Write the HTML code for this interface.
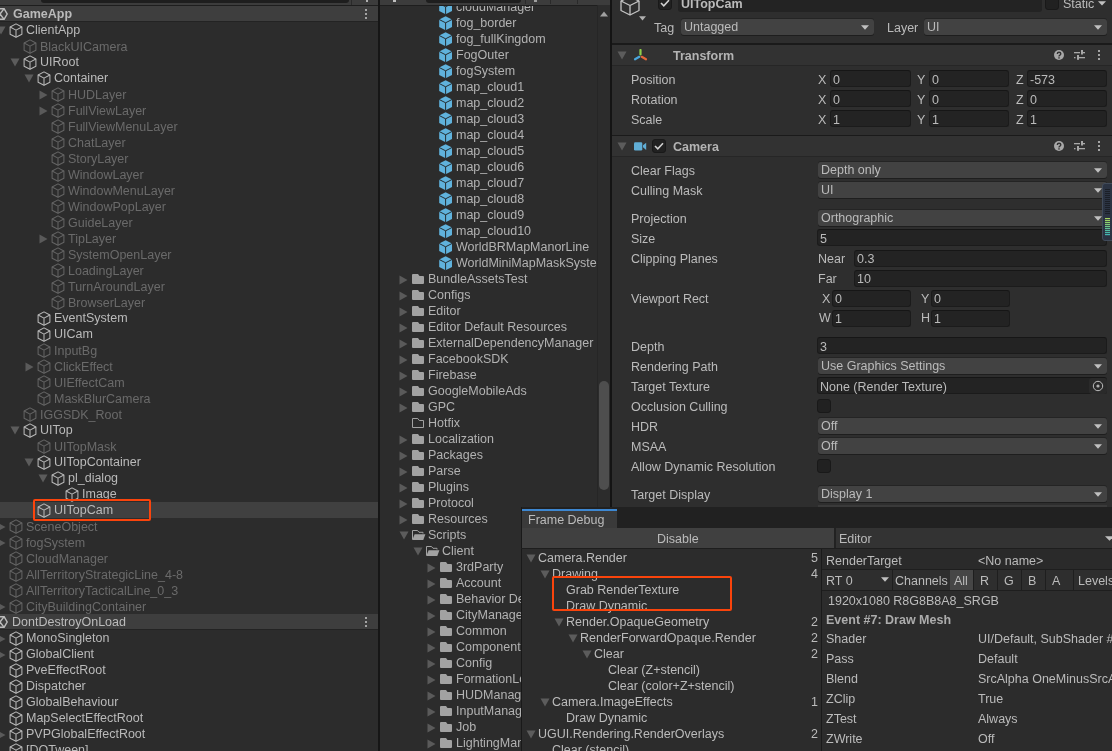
<!DOCTYPE html><html><head><meta charset="utf-8"><style>
html,body{margin:0;padding:0;}
body{width:1112px;height:751px;overflow:hidden;position:relative;background:#2c2c2c;font-family:"Liberation Sans",sans-serif;font-size:12.5px;}
.t{position:absolute;white-space:pre;line-height:16px;height:16px;will-change:transform;}
.r{position:absolute;}
.clip{position:absolute;overflow:hidden;}
</style></head><body>
<div class="clip" style="left:0;top:0;width:378px;height:751px;background:#2c2c2c">
<div class="r" style="left:0px;top:0px;width:378px;height:5px;background:#3c3c3c;"></div>
<div class="r" style="left:0px;top:5px;width:378px;height:1px;background:#1e1e1e;"></div>
<div class="r" style="left:41px;top:0px;width:308px;height:3px;background:#1e1e1e;border-radius:0 0 4px 4px;"></div>
<div class="r" style="left:351px;top:0px;width:1px;height:5px;background:#2a2a2a;"></div>
<div class="r" style="left:366px;top:0px;width:2px;height:2px;background:#b0b0b0;"></div>
<div class="r" style="left:0px;top:6px;width:378px;height:15px;background:#3e3e3e;"></div>
<div class="r" style="left:0px;top:21px;width:378px;height:1px;background:#232323;"></div>
<svg class="r" style="left:-5.5px;top:6.5px;" width="13" height="14" viewBox="0 0 13 14"><g fill="none" stroke="#bbbbbb" stroke-width="1.5"><polygon points="12.20,7.00 9.10,12.37 2.90,12.37 -0.20,7.00 2.90,1.63 9.10,1.63"/><path d="M5.00 7.0 L9.10 12.37"/><path d="M5.00 7.0 L-0.20 7.00"/><path d="M5.00 7.0 L9.10 1.63"/></g></svg>
<div class="t" style="left:13px;top:5.5px;color:#bababa;font-size:12.5px;font-weight:bold;">GameApp</div>
<svg class="r" style="left:365px;top:9px;" width="2" height="10" viewBox="0 0 2 10"><rect x="0" y="0" width="2" height="2" fill="#a4a4a4"/><rect x="0" y="4" width="2" height="2" fill="#a4a4a4"/><rect x="0" y="8" width="2" height="2" fill="#a4a4a4"/></svg>
<svg class="r" style="left:-4.5px;top:26px;" width="10" height="9" viewBox="0 0 10 9"><path d="M0.5 0.5 L9.5 0.5 L5 8.5 Z" fill="#5c5c5c"/></svg>
<svg class="r" style="left:9px;top:23px;" width="14" height="15" viewBox="0 0 14 15"><g fill="none" stroke="#b8b8b8" stroke-width="1.05" stroke-linejoin="round"><path d="M7 0.9 L12.9 4 L12.9 11.2 L7 14.3 L1.1 11.2 L1.1 4 Z"/><path d="M1.1 4 L7 7.1 L12.9 4 M7 7.1 L7 14.3"/></g></svg>
<div class="t" style="left:26px;top:22px;color:#bababa;font-size:12.5px;">ClientApp</div>
<svg class="r" style="left:23px;top:39px;" width="14" height="15" viewBox="0 0 14 15"><g fill="none" stroke="#646464" stroke-width="1.05" stroke-linejoin="round"><path d="M7 0.9 L12.9 4 L12.9 11.2 L7 14.3 L1.1 11.2 L1.1 4 Z"/><path d="M1.1 4 L7 7.1 L12.9 4 M7 7.1 L7 14.3"/></g></svg>
<div class="t" style="left:40px;top:39px;color:#6a6a6a;font-size:12.5px;">BlackUICamera</div>
<svg class="r" style="left:9.5px;top:58px;" width="10" height="9" viewBox="0 0 10 9"><path d="M0.5 0.5 L9.5 0.5 L5 8.5 Z" fill="#5c5c5c"/></svg>
<svg class="r" style="left:23px;top:55px;" width="14" height="15" viewBox="0 0 14 15"><g fill="none" stroke="#b8b8b8" stroke-width="1.05" stroke-linejoin="round"><path d="M7 0.9 L12.9 4 L12.9 11.2 L7 14.3 L1.1 11.2 L1.1 4 Z"/><path d="M1.1 4 L7 7.1 L12.9 4 M7 7.1 L7 14.3"/></g></svg>
<div class="t" style="left:40px;top:54px;color:#bababa;font-size:12.5px;">UIRoot</div>
<svg class="r" style="left:23.5px;top:74px;" width="10" height="9" viewBox="0 0 10 9"><path d="M0.5 0.5 L9.5 0.5 L5 8.5 Z" fill="#5c5c5c"/></svg>
<svg class="r" style="left:37px;top:71px;" width="14" height="15" viewBox="0 0 14 15"><g fill="none" stroke="#b8b8b8" stroke-width="1.05" stroke-linejoin="round"><path d="M7 0.9 L12.9 4 L12.9 11.2 L7 14.3 L1.1 11.2 L1.1 4 Z"/><path d="M1.1 4 L7 7.1 L12.9 4 M7 7.1 L7 14.3"/></g></svg>
<div class="t" style="left:54px;top:70px;color:#bababa;font-size:12.5px;">Container</div>
<svg class="r" style="left:39px;top:89.5px;" width="9" height="10" viewBox="0 0 9 10"><path d="M0.5 0.5 L8.5 5 L0.5 9.5 Z" fill="#5a5a5a"/></svg>
<svg class="r" style="left:51px;top:87px;" width="14" height="15" viewBox="0 0 14 15"><g fill="none" stroke="#646464" stroke-width="1.05" stroke-linejoin="round"><path d="M7 0.9 L12.9 4 L12.9 11.2 L7 14.3 L1.1 11.2 L1.1 4 Z"/><path d="M1.1 4 L7 7.1 L12.9 4 M7 7.1 L7 14.3"/></g></svg>
<div class="t" style="left:68px;top:87px;color:#6a6a6a;font-size:12.5px;">HUDLayer</div>
<svg class="r" style="left:39px;top:105.5px;" width="9" height="10" viewBox="0 0 9 10"><path d="M0.5 0.5 L8.5 5 L0.5 9.5 Z" fill="#5a5a5a"/></svg>
<svg class="r" style="left:51px;top:103px;" width="14" height="15" viewBox="0 0 14 15"><g fill="none" stroke="#646464" stroke-width="1.05" stroke-linejoin="round"><path d="M7 0.9 L12.9 4 L12.9 11.2 L7 14.3 L1.1 11.2 L1.1 4 Z"/><path d="M1.1 4 L7 7.1 L12.9 4 M7 7.1 L7 14.3"/></g></svg>
<div class="t" style="left:68px;top:103px;color:#6a6a6a;font-size:12.5px;">FullViewLayer</div>
<svg class="r" style="left:51px;top:119px;" width="14" height="15" viewBox="0 0 14 15"><g fill="none" stroke="#646464" stroke-width="1.05" stroke-linejoin="round"><path d="M7 0.9 L12.9 4 L12.9 11.2 L7 14.3 L1.1 11.2 L1.1 4 Z"/><path d="M1.1 4 L7 7.1 L12.9 4 M7 7.1 L7 14.3"/></g></svg>
<div class="t" style="left:68px;top:119px;color:#6a6a6a;font-size:12.5px;">FullViewMenuLayer</div>
<svg class="r" style="left:51px;top:135px;" width="14" height="15" viewBox="0 0 14 15"><g fill="none" stroke="#646464" stroke-width="1.05" stroke-linejoin="round"><path d="M7 0.9 L12.9 4 L12.9 11.2 L7 14.3 L1.1 11.2 L1.1 4 Z"/><path d="M1.1 4 L7 7.1 L12.9 4 M7 7.1 L7 14.3"/></g></svg>
<div class="t" style="left:68px;top:135px;color:#6a6a6a;font-size:12.5px;">ChatLayer</div>
<svg class="r" style="left:51px;top:151px;" width="14" height="15" viewBox="0 0 14 15"><g fill="none" stroke="#646464" stroke-width="1.05" stroke-linejoin="round"><path d="M7 0.9 L12.9 4 L12.9 11.2 L7 14.3 L1.1 11.2 L1.1 4 Z"/><path d="M1.1 4 L7 7.1 L12.9 4 M7 7.1 L7 14.3"/></g></svg>
<div class="t" style="left:68px;top:151px;color:#6a6a6a;font-size:12.5px;">StoryLayer</div>
<svg class="r" style="left:51px;top:167px;" width="14" height="15" viewBox="0 0 14 15"><g fill="none" stroke="#646464" stroke-width="1.05" stroke-linejoin="round"><path d="M7 0.9 L12.9 4 L12.9 11.2 L7 14.3 L1.1 11.2 L1.1 4 Z"/><path d="M1.1 4 L7 7.1 L12.9 4 M7 7.1 L7 14.3"/></g></svg>
<div class="t" style="left:68px;top:167px;color:#6a6a6a;font-size:12.5px;">WindowLayer</div>
<svg class="r" style="left:51px;top:183px;" width="14" height="15" viewBox="0 0 14 15"><g fill="none" stroke="#646464" stroke-width="1.05" stroke-linejoin="round"><path d="M7 0.9 L12.9 4 L12.9 11.2 L7 14.3 L1.1 11.2 L1.1 4 Z"/><path d="M1.1 4 L7 7.1 L12.9 4 M7 7.1 L7 14.3"/></g></svg>
<div class="t" style="left:68px;top:183px;color:#6a6a6a;font-size:12.5px;">WindowMenuLayer</div>
<svg class="r" style="left:51px;top:199px;" width="14" height="15" viewBox="0 0 14 15"><g fill="none" stroke="#646464" stroke-width="1.05" stroke-linejoin="round"><path d="M7 0.9 L12.9 4 L12.9 11.2 L7 14.3 L1.1 11.2 L1.1 4 Z"/><path d="M1.1 4 L7 7.1 L12.9 4 M7 7.1 L7 14.3"/></g></svg>
<div class="t" style="left:68px;top:199px;color:#6a6a6a;font-size:12.5px;">WindowPopLayer</div>
<svg class="r" style="left:51px;top:215px;" width="14" height="15" viewBox="0 0 14 15"><g fill="none" stroke="#646464" stroke-width="1.05" stroke-linejoin="round"><path d="M7 0.9 L12.9 4 L12.9 11.2 L7 14.3 L1.1 11.2 L1.1 4 Z"/><path d="M1.1 4 L7 7.1 L12.9 4 M7 7.1 L7 14.3"/></g></svg>
<div class="t" style="left:68px;top:215px;color:#6a6a6a;font-size:12.5px;">GuideLayer</div>
<svg class="r" style="left:39px;top:233.5px;" width="9" height="10" viewBox="0 0 9 10"><path d="M0.5 0.5 L8.5 5 L0.5 9.5 Z" fill="#5a5a5a"/></svg>
<svg class="r" style="left:51px;top:231px;" width="14" height="15" viewBox="0 0 14 15"><g fill="none" stroke="#646464" stroke-width="1.05" stroke-linejoin="round"><path d="M7 0.9 L12.9 4 L12.9 11.2 L7 14.3 L1.1 11.2 L1.1 4 Z"/><path d="M1.1 4 L7 7.1 L12.9 4 M7 7.1 L7 14.3"/></g></svg>
<div class="t" style="left:68px;top:231px;color:#6a6a6a;font-size:12.5px;">TipLayer</div>
<svg class="r" style="left:51px;top:247px;" width="14" height="15" viewBox="0 0 14 15"><g fill="none" stroke="#646464" stroke-width="1.05" stroke-linejoin="round"><path d="M7 0.9 L12.9 4 L12.9 11.2 L7 14.3 L1.1 11.2 L1.1 4 Z"/><path d="M1.1 4 L7 7.1 L12.9 4 M7 7.1 L7 14.3"/></g></svg>
<div class="t" style="left:68px;top:247px;color:#6a6a6a;font-size:12.5px;">SystemOpenLayer</div>
<svg class="r" style="left:51px;top:263px;" width="14" height="15" viewBox="0 0 14 15"><g fill="none" stroke="#646464" stroke-width="1.05" stroke-linejoin="round"><path d="M7 0.9 L12.9 4 L12.9 11.2 L7 14.3 L1.1 11.2 L1.1 4 Z"/><path d="M1.1 4 L7 7.1 L12.9 4 M7 7.1 L7 14.3"/></g></svg>
<div class="t" style="left:68px;top:263px;color:#6a6a6a;font-size:12.5px;">LoadingLayer</div>
<svg class="r" style="left:51px;top:279px;" width="14" height="15" viewBox="0 0 14 15"><g fill="none" stroke="#646464" stroke-width="1.05" stroke-linejoin="round"><path d="M7 0.9 L12.9 4 L12.9 11.2 L7 14.3 L1.1 11.2 L1.1 4 Z"/><path d="M1.1 4 L7 7.1 L12.9 4 M7 7.1 L7 14.3"/></g></svg>
<div class="t" style="left:68px;top:279px;color:#6a6a6a;font-size:12.5px;">TurnAroundLayer</div>
<svg class="r" style="left:51px;top:295px;" width="14" height="15" viewBox="0 0 14 15"><g fill="none" stroke="#646464" stroke-width="1.05" stroke-linejoin="round"><path d="M7 0.9 L12.9 4 L12.9 11.2 L7 14.3 L1.1 11.2 L1.1 4 Z"/><path d="M1.1 4 L7 7.1 L12.9 4 M7 7.1 L7 14.3"/></g></svg>
<div class="t" style="left:68px;top:295px;color:#6a6a6a;font-size:12.5px;">BrowserLayer</div>
<svg class="r" style="left:37px;top:311px;" width="14" height="15" viewBox="0 0 14 15"><g fill="none" stroke="#b8b8b8" stroke-width="1.05" stroke-linejoin="round"><path d="M7 0.9 L12.9 4 L12.9 11.2 L7 14.3 L1.1 11.2 L1.1 4 Z"/><path d="M1.1 4 L7 7.1 L12.9 4 M7 7.1 L7 14.3"/></g></svg>
<div class="t" style="left:54px;top:310px;color:#bababa;font-size:12.5px;">EventSystem</div>
<svg class="r" style="left:37px;top:327px;" width="14" height="15" viewBox="0 0 14 15"><g fill="none" stroke="#b8b8b8" stroke-width="1.05" stroke-linejoin="round"><path d="M7 0.9 L12.9 4 L12.9 11.2 L7 14.3 L1.1 11.2 L1.1 4 Z"/><path d="M1.1 4 L7 7.1 L12.9 4 M7 7.1 L7 14.3"/></g></svg>
<div class="t" style="left:54px;top:326px;color:#bababa;font-size:12.5px;">UICam</div>
<svg class="r" style="left:37px;top:343px;" width="14" height="15" viewBox="0 0 14 15"><g fill="none" stroke="#646464" stroke-width="1.05" stroke-linejoin="round"><path d="M7 0.9 L12.9 4 L12.9 11.2 L7 14.3 L1.1 11.2 L1.1 4 Z"/><path d="M1.1 4 L7 7.1 L12.9 4 M7 7.1 L7 14.3"/></g></svg>
<div class="t" style="left:54px;top:343px;color:#6a6a6a;font-size:12.5px;">InputBg</div>
<svg class="r" style="left:25px;top:361.5px;" width="9" height="10" viewBox="0 0 9 10"><path d="M0.5 0.5 L8.5 5 L0.5 9.5 Z" fill="#5a5a5a"/></svg>
<svg class="r" style="left:37px;top:359px;" width="14" height="15" viewBox="0 0 14 15"><g fill="none" stroke="#646464" stroke-width="1.05" stroke-linejoin="round"><path d="M7 0.9 L12.9 4 L12.9 11.2 L7 14.3 L1.1 11.2 L1.1 4 Z"/><path d="M1.1 4 L7 7.1 L12.9 4 M7 7.1 L7 14.3"/></g></svg>
<div class="t" style="left:54px;top:359px;color:#6a6a6a;font-size:12.5px;">ClickEffect</div>
<svg class="r" style="left:37px;top:375px;" width="14" height="15" viewBox="0 0 14 15"><g fill="none" stroke="#646464" stroke-width="1.05" stroke-linejoin="round"><path d="M7 0.9 L12.9 4 L12.9 11.2 L7 14.3 L1.1 11.2 L1.1 4 Z"/><path d="M1.1 4 L7 7.1 L12.9 4 M7 7.1 L7 14.3"/></g></svg>
<div class="t" style="left:54px;top:375px;color:#6a6a6a;font-size:12.5px;">UIEffectCam</div>
<svg class="r" style="left:37px;top:391px;" width="14" height="15" viewBox="0 0 14 15"><g fill="none" stroke="#646464" stroke-width="1.05" stroke-linejoin="round"><path d="M7 0.9 L12.9 4 L12.9 11.2 L7 14.3 L1.1 11.2 L1.1 4 Z"/><path d="M1.1 4 L7 7.1 L12.9 4 M7 7.1 L7 14.3"/></g></svg>
<div class="t" style="left:54px;top:391px;color:#6a6a6a;font-size:12.5px;">MaskBlurCamera</div>
<svg class="r" style="left:23px;top:407px;" width="14" height="15" viewBox="0 0 14 15"><g fill="none" stroke="#646464" stroke-width="1.05" stroke-linejoin="round"><path d="M7 0.9 L12.9 4 L12.9 11.2 L7 14.3 L1.1 11.2 L1.1 4 Z"/><path d="M1.1 4 L7 7.1 L12.9 4 M7 7.1 L7 14.3"/></g></svg>
<div class="t" style="left:40px;top:407px;color:#6a6a6a;font-size:12.5px;">IGGSDK_Root</div>
<svg class="r" style="left:9.5px;top:426px;" width="10" height="9" viewBox="0 0 10 9"><path d="M0.5 0.5 L9.5 0.5 L5 8.5 Z" fill="#5c5c5c"/></svg>
<svg class="r" style="left:23px;top:423px;" width="14" height="15" viewBox="0 0 14 15"><g fill="none" stroke="#b8b8b8" stroke-width="1.05" stroke-linejoin="round"><path d="M7 0.9 L12.9 4 L12.9 11.2 L7 14.3 L1.1 11.2 L1.1 4 Z"/><path d="M1.1 4 L7 7.1 L12.9 4 M7 7.1 L7 14.3"/></g></svg>
<div class="t" style="left:40px;top:422px;color:#bababa;font-size:12.5px;">UITop</div>
<svg class="r" style="left:37px;top:439px;" width="14" height="15" viewBox="0 0 14 15"><g fill="none" stroke="#646464" stroke-width="1.05" stroke-linejoin="round"><path d="M7 0.9 L12.9 4 L12.9 11.2 L7 14.3 L1.1 11.2 L1.1 4 Z"/><path d="M1.1 4 L7 7.1 L12.9 4 M7 7.1 L7 14.3"/></g></svg>
<div class="t" style="left:54px;top:439px;color:#6a6a6a;font-size:12.5px;">UITopMask</div>
<svg class="r" style="left:23.5px;top:458px;" width="10" height="9" viewBox="0 0 10 9"><path d="M0.5 0.5 L9.5 0.5 L5 8.5 Z" fill="#5c5c5c"/></svg>
<svg class="r" style="left:37px;top:455px;" width="14" height="15" viewBox="0 0 14 15"><g fill="none" stroke="#b8b8b8" stroke-width="1.05" stroke-linejoin="round"><path d="M7 0.9 L12.9 4 L12.9 11.2 L7 14.3 L1.1 11.2 L1.1 4 Z"/><path d="M1.1 4 L7 7.1 L12.9 4 M7 7.1 L7 14.3"/></g></svg>
<div class="t" style="left:54px;top:454px;color:#bababa;font-size:12.5px;">UITopContainer</div>
<svg class="r" style="left:37.5px;top:474px;" width="10" height="9" viewBox="0 0 10 9"><path d="M0.5 0.5 L9.5 0.5 L5 8.5 Z" fill="#5c5c5c"/></svg>
<svg class="r" style="left:51px;top:471px;" width="14" height="15" viewBox="0 0 14 15"><g fill="none" stroke="#b8b8b8" stroke-width="1.05" stroke-linejoin="round"><path d="M7 0.9 L12.9 4 L12.9 11.2 L7 14.3 L1.1 11.2 L1.1 4 Z"/><path d="M1.1 4 L7 7.1 L12.9 4 M7 7.1 L7 14.3"/></g></svg>
<div class="t" style="left:68px;top:470px;color:#bababa;font-size:12.5px;">pl_dialog</div>
<svg class="r" style="left:65px;top:487px;" width="14" height="15" viewBox="0 0 14 15"><g fill="none" stroke="#b8b8b8" stroke-width="1.05" stroke-linejoin="round"><path d="M7 0.9 L12.9 4 L12.9 11.2 L7 14.3 L1.1 11.2 L1.1 4 Z"/><path d="M1.1 4 L7 7.1 L12.9 4 M7 7.1 L7 14.3"/></g></svg>
<div class="t" style="left:82px;top:486px;color:#bababa;font-size:12.5px;">Image</div>
<div class="r" style="left:0px;top:502px;width:378px;height:16px;background:#404040;"></div>
<svg class="r" style="left:37px;top:503px;" width="14" height="15" viewBox="0 0 14 15"><g fill="none" stroke="#b8b8b8" stroke-width="1.05" stroke-linejoin="round"><path d="M7 0.9 L12.9 4 L12.9 11.2 L7 14.3 L1.1 11.2 L1.1 4 Z"/><path d="M1.1 4 L7 7.1 L12.9 4 M7 7.1 L7 14.3"/></g></svg>
<div class="t" style="left:54px;top:502px;color:#bababa;font-size:12.5px;">UITopCam</div>
<svg class="r" style="left:-3px;top:521.5px;" width="9" height="10" viewBox="0 0 9 10"><path d="M0.5 0.5 L8.5 5 L0.5 9.5 Z" fill="#5a5a5a"/></svg>
<svg class="r" style="left:9px;top:519px;" width="14" height="15" viewBox="0 0 14 15"><g fill="none" stroke="#646464" stroke-width="1.05" stroke-linejoin="round"><path d="M7 0.9 L12.9 4 L12.9 11.2 L7 14.3 L1.1 11.2 L1.1 4 Z"/><path d="M1.1 4 L7 7.1 L12.9 4 M7 7.1 L7 14.3"/></g></svg>
<div class="t" style="left:26px;top:519px;color:#6a6a6a;font-size:12.5px;">SceneObject</div>
<svg class="r" style="left:-3px;top:537.5px;" width="9" height="10" viewBox="0 0 9 10"><path d="M0.5 0.5 L8.5 5 L0.5 9.5 Z" fill="#5a5a5a"/></svg>
<svg class="r" style="left:9px;top:535px;" width="14" height="15" viewBox="0 0 14 15"><g fill="none" stroke="#646464" stroke-width="1.05" stroke-linejoin="round"><path d="M7 0.9 L12.9 4 L12.9 11.2 L7 14.3 L1.1 11.2 L1.1 4 Z"/><path d="M1.1 4 L7 7.1 L12.9 4 M7 7.1 L7 14.3"/></g></svg>
<div class="t" style="left:26px;top:535px;color:#6a6a6a;font-size:12.5px;">fogSystem</div>
<svg class="r" style="left:9px;top:551px;" width="14" height="15" viewBox="0 0 14 15"><g fill="none" stroke="#646464" stroke-width="1.05" stroke-linejoin="round"><path d="M7 0.9 L12.9 4 L12.9 11.2 L7 14.3 L1.1 11.2 L1.1 4 Z"/><path d="M1.1 4 L7 7.1 L12.9 4 M7 7.1 L7 14.3"/></g></svg>
<div class="t" style="left:26px;top:551px;color:#6a6a6a;font-size:12.5px;">CloudManager</div>
<svg class="r" style="left:9px;top:567px;" width="14" height="15" viewBox="0 0 14 15"><g fill="none" stroke="#646464" stroke-width="1.05" stroke-linejoin="round"><path d="M7 0.9 L12.9 4 L12.9 11.2 L7 14.3 L1.1 11.2 L1.1 4 Z"/><path d="M1.1 4 L7 7.1 L12.9 4 M7 7.1 L7 14.3"/></g></svg>
<div class="t" style="left:26px;top:567px;color:#6a6a6a;font-size:12.5px;">AllTerritoryStrategicLine_4-8</div>
<svg class="r" style="left:9px;top:583px;" width="14" height="15" viewBox="0 0 14 15"><g fill="none" stroke="#646464" stroke-width="1.05" stroke-linejoin="round"><path d="M7 0.9 L12.9 4 L12.9 11.2 L7 14.3 L1.1 11.2 L1.1 4 Z"/><path d="M1.1 4 L7 7.1 L12.9 4 M7 7.1 L7 14.3"/></g></svg>
<div class="t" style="left:26px;top:583px;color:#6a6a6a;font-size:12.5px;">AllTerritoryTacticalLine_0_3</div>
<svg class="r" style="left:-3px;top:601.5px;" width="9" height="10" viewBox="0 0 9 10"><path d="M0.5 0.5 L8.5 5 L0.5 9.5 Z" fill="#5a5a5a"/></svg>
<svg class="r" style="left:9px;top:599px;" width="14" height="15" viewBox="0 0 14 15"><g fill="none" stroke="#646464" stroke-width="1.05" stroke-linejoin="round"><path d="M7 0.9 L12.9 4 L12.9 11.2 L7 14.3 L1.1 11.2 L1.1 4 Z"/><path d="M1.1 4 L7 7.1 L12.9 4 M7 7.1 L7 14.3"/></g></svg>
<div class="t" style="left:26px;top:599px;color:#6a6a6a;font-size:12.5px;">CityBuildingContainer</div>
<div class="r" style="left:0px;top:614px;width:378px;height:15px;background:#3e3e3e;"></div>
<div class="r" style="left:0px;top:629px;width:378px;height:1px;background:#232323;"></div>
<svg class="r" style="left:-5.5px;top:614.5px;" width="13" height="14" viewBox="0 0 13 14"><g fill="none" stroke="#bbbbbb" stroke-width="1.5"><polygon points="12.20,7.00 9.10,12.37 2.90,12.37 -0.20,7.00 2.90,1.63 9.10,1.63"/><path d="M5.00 7.0 L9.10 12.37"/><path d="M5.00 7.0 L-0.20 7.00"/><path d="M5.00 7.0 L9.10 1.63"/></g></svg>
<div class="t" style="left:12px;top:614px;color:#bbbbbb;font-size:12.5px;">DontDestroyOnLoad</div>
<svg class="r" style="left:365px;top:617px;" width="2" height="10" viewBox="0 0 2 10"><rect x="0" y="0" width="2" height="2" fill="#a4a4a4"/><rect x="0" y="4" width="2" height="2" fill="#a4a4a4"/><rect x="0" y="8" width="2" height="2" fill="#a4a4a4"/></svg>
<svg class="r" style="left:-3px;top:633.5px;" width="9" height="10" viewBox="0 0 9 10"><path d="M0.5 0.5 L8.5 5 L0.5 9.5 Z" fill="#5a5a5a"/></svg>
<svg class="r" style="left:9px;top:631px;" width="14" height="15" viewBox="0 0 14 15"><g fill="none" stroke="#b8b8b8" stroke-width="1.05" stroke-linejoin="round"><path d="M7 0.9 L12.9 4 L12.9 11.2 L7 14.3 L1.1 11.2 L1.1 4 Z"/><path d="M1.1 4 L7 7.1 L12.9 4 M7 7.1 L7 14.3"/></g></svg>
<div class="t" style="left:26px;top:630px;color:#bababa;font-size:12.5px;">MonoSingleton</div>
<svg class="r" style="left:-3px;top:649.5px;" width="9" height="10" viewBox="0 0 9 10"><path d="M0.5 0.5 L8.5 5 L0.5 9.5 Z" fill="#5a5a5a"/></svg>
<svg class="r" style="left:9px;top:647px;" width="14" height="15" viewBox="0 0 14 15"><g fill="none" stroke="#b8b8b8" stroke-width="1.05" stroke-linejoin="round"><path d="M7 0.9 L12.9 4 L12.9 11.2 L7 14.3 L1.1 11.2 L1.1 4 Z"/><path d="M1.1 4 L7 7.1 L12.9 4 M7 7.1 L7 14.3"/></g></svg>
<div class="t" style="left:26px;top:646px;color:#bababa;font-size:12.5px;">GlobalClient</div>
<svg class="r" style="left:9px;top:663px;" width="14" height="15" viewBox="0 0 14 15"><g fill="none" stroke="#b8b8b8" stroke-width="1.05" stroke-linejoin="round"><path d="M7 0.9 L12.9 4 L12.9 11.2 L7 14.3 L1.1 11.2 L1.1 4 Z"/><path d="M1.1 4 L7 7.1 L12.9 4 M7 7.1 L7 14.3"/></g></svg>
<div class="t" style="left:26px;top:662px;color:#bababa;font-size:12.5px;">PveEffectRoot</div>
<svg class="r" style="left:9px;top:679px;" width="14" height="15" viewBox="0 0 14 15"><g fill="none" stroke="#b8b8b8" stroke-width="1.05" stroke-linejoin="round"><path d="M7 0.9 L12.9 4 L12.9 11.2 L7 14.3 L1.1 11.2 L1.1 4 Z"/><path d="M1.1 4 L7 7.1 L12.9 4 M7 7.1 L7 14.3"/></g></svg>
<div class="t" style="left:26px;top:678px;color:#bababa;font-size:12.5px;">Dispatcher</div>
<svg class="r" style="left:9px;top:695px;" width="14" height="15" viewBox="0 0 14 15"><g fill="none" stroke="#b8b8b8" stroke-width="1.05" stroke-linejoin="round"><path d="M7 0.9 L12.9 4 L12.9 11.2 L7 14.3 L1.1 11.2 L1.1 4 Z"/><path d="M1.1 4 L7 7.1 L12.9 4 M7 7.1 L7 14.3"/></g></svg>
<div class="t" style="left:26px;top:694px;color:#bababa;font-size:12.5px;">GlobalBehaviour</div>
<svg class="r" style="left:9px;top:711px;" width="14" height="15" viewBox="0 0 14 15"><g fill="none" stroke="#b8b8b8" stroke-width="1.05" stroke-linejoin="round"><path d="M7 0.9 L12.9 4 L12.9 11.2 L7 14.3 L1.1 11.2 L1.1 4 Z"/><path d="M1.1 4 L7 7.1 L12.9 4 M7 7.1 L7 14.3"/></g></svg>
<div class="t" style="left:26px;top:710px;color:#bababa;font-size:12.5px;">MapSelectEffectRoot</div>
<svg class="r" style="left:-3px;top:729.5px;" width="9" height="10" viewBox="0 0 9 10"><path d="M0.5 0.5 L8.5 5 L0.5 9.5 Z" fill="#5a5a5a"/></svg>
<svg class="r" style="left:9px;top:727px;" width="14" height="15" viewBox="0 0 14 15"><g fill="none" stroke="#b8b8b8" stroke-width="1.05" stroke-linejoin="round"><path d="M7 0.9 L12.9 4 L12.9 11.2 L7 14.3 L1.1 11.2 L1.1 4 Z"/><path d="M1.1 4 L7 7.1 L12.9 4 M7 7.1 L7 14.3"/></g></svg>
<div class="t" style="left:26px;top:726px;color:#bababa;font-size:12.5px;">PVPGlobalEffectRoot</div>
<svg class="r" style="left:9px;top:743px;" width="14" height="15" viewBox="0 0 14 15"><g fill="none" stroke="#b8b8b8" stroke-width="1.05" stroke-linejoin="round"><path d="M7 0.9 L12.9 4 L12.9 11.2 L7 14.3 L1.1 11.2 L1.1 4 Z"/><path d="M1.1 4 L7 7.1 L12.9 4 M7 7.1 L7 14.3"/></g></svg>
<div class="t" style="left:26px;top:742px;color:#bababa;font-size:12.5px;">[DOTween]</div>
<div class="r" style="left:33px;top:499px;width:118px;height:22px;background:transparent;box-sizing:border-box;border:2px solid #fa440c;border-radius:2px;"></div>
</div>
<div class="r" style="left:378px;top:0px;width:2px;height:751px;background:#161616;"></div>
<div class="clip" style="left:380px;top:0;width:230px;height:751px;background:#2c2c2c">
<svg class="r" style="left:59px;top:0px;" width="14" height="15" viewBox="0 0 14 15"><path d="M6.6 0.3 L13 3.5 L13 11 L6.6 14.3 L0.2 11 L0.2 3.5 Z" fill="#60b2dc"/><path d="M0.2 3.5 L6.6 6.8 L13 3.5 M6.6 6.8 L6.6 14.3" fill="none" stroke="#1e1e1e" stroke-width="0.9"/></svg>
<div class="t" style="left:76px;top:-1px;color:#b2b2b2;font-size:12.5px;">cloudManager</div>
<svg class="r" style="left:59px;top:16px;" width="14" height="15" viewBox="0 0 14 15"><path d="M6.6 0.3 L13 3.5 L13 11 L6.6 14.3 L0.2 11 L0.2 3.5 Z" fill="#60b2dc"/><path d="M0.2 3.5 L6.6 6.8 L13 3.5 M6.6 6.8 L6.6 14.3" fill="none" stroke="#1e1e1e" stroke-width="0.9"/></svg>
<div class="t" style="left:76px;top:15px;color:#b2b2b2;font-size:12.5px;">fog_border</div>
<svg class="r" style="left:59px;top:32px;" width="14" height="15" viewBox="0 0 14 15"><path d="M6.6 0.3 L13 3.5 L13 11 L6.6 14.3 L0.2 11 L0.2 3.5 Z" fill="#60b2dc"/><path d="M0.2 3.5 L6.6 6.8 L13 3.5 M6.6 6.8 L6.6 14.3" fill="none" stroke="#1e1e1e" stroke-width="0.9"/></svg>
<div class="t" style="left:76px;top:31px;color:#b2b2b2;font-size:12.5px;">fog_fullKingdom</div>
<svg class="r" style="left:59px;top:48px;" width="14" height="15" viewBox="0 0 14 15"><path d="M6.6 0.3 L13 3.5 L13 11 L6.6 14.3 L0.2 11 L0.2 3.5 Z" fill="#60b2dc"/><path d="M0.2 3.5 L6.6 6.8 L13 3.5 M6.6 6.8 L6.6 14.3" fill="none" stroke="#1e1e1e" stroke-width="0.9"/></svg>
<div class="t" style="left:76px;top:47px;color:#b2b2b2;font-size:12.5px;">FogOuter</div>
<svg class="r" style="left:59px;top:64px;" width="14" height="15" viewBox="0 0 14 15"><path d="M6.6 0.3 L13 3.5 L13 11 L6.6 14.3 L0.2 11 L0.2 3.5 Z" fill="#60b2dc"/><path d="M0.2 3.5 L6.6 6.8 L13 3.5 M6.6 6.8 L6.6 14.3" fill="none" stroke="#1e1e1e" stroke-width="0.9"/></svg>
<div class="t" style="left:76px;top:63px;color:#b2b2b2;font-size:12.5px;">fogSystem</div>
<svg class="r" style="left:59px;top:80px;" width="14" height="15" viewBox="0 0 14 15"><path d="M6.6 0.3 L13 3.5 L13 11 L6.6 14.3 L0.2 11 L0.2 3.5 Z" fill="#60b2dc"/><path d="M0.2 3.5 L6.6 6.8 L13 3.5 M6.6 6.8 L6.6 14.3" fill="none" stroke="#1e1e1e" stroke-width="0.9"/></svg>
<div class="t" style="left:76px;top:79px;color:#b2b2b2;font-size:12.5px;">map_cloud1</div>
<svg class="r" style="left:59px;top:96px;" width="14" height="15" viewBox="0 0 14 15"><path d="M6.6 0.3 L13 3.5 L13 11 L6.6 14.3 L0.2 11 L0.2 3.5 Z" fill="#60b2dc"/><path d="M0.2 3.5 L6.6 6.8 L13 3.5 M6.6 6.8 L6.6 14.3" fill="none" stroke="#1e1e1e" stroke-width="0.9"/></svg>
<div class="t" style="left:76px;top:95px;color:#b2b2b2;font-size:12.5px;">map_cloud2</div>
<svg class="r" style="left:59px;top:112px;" width="14" height="15" viewBox="0 0 14 15"><path d="M6.6 0.3 L13 3.5 L13 11 L6.6 14.3 L0.2 11 L0.2 3.5 Z" fill="#60b2dc"/><path d="M0.2 3.5 L6.6 6.8 L13 3.5 M6.6 6.8 L6.6 14.3" fill="none" stroke="#1e1e1e" stroke-width="0.9"/></svg>
<div class="t" style="left:76px;top:111px;color:#b2b2b2;font-size:12.5px;">map_cloud3</div>
<svg class="r" style="left:59px;top:128px;" width="14" height="15" viewBox="0 0 14 15"><path d="M6.6 0.3 L13 3.5 L13 11 L6.6 14.3 L0.2 11 L0.2 3.5 Z" fill="#60b2dc"/><path d="M0.2 3.5 L6.6 6.8 L13 3.5 M6.6 6.8 L6.6 14.3" fill="none" stroke="#1e1e1e" stroke-width="0.9"/></svg>
<div class="t" style="left:76px;top:127px;color:#b2b2b2;font-size:12.5px;">map_cloud4</div>
<svg class="r" style="left:59px;top:144px;" width="14" height="15" viewBox="0 0 14 15"><path d="M6.6 0.3 L13 3.5 L13 11 L6.6 14.3 L0.2 11 L0.2 3.5 Z" fill="#60b2dc"/><path d="M0.2 3.5 L6.6 6.8 L13 3.5 M6.6 6.8 L6.6 14.3" fill="none" stroke="#1e1e1e" stroke-width="0.9"/></svg>
<div class="t" style="left:76px;top:143px;color:#b2b2b2;font-size:12.5px;">map_cloud5</div>
<svg class="r" style="left:59px;top:160px;" width="14" height="15" viewBox="0 0 14 15"><path d="M6.6 0.3 L13 3.5 L13 11 L6.6 14.3 L0.2 11 L0.2 3.5 Z" fill="#60b2dc"/><path d="M0.2 3.5 L6.6 6.8 L13 3.5 M6.6 6.8 L6.6 14.3" fill="none" stroke="#1e1e1e" stroke-width="0.9"/></svg>
<div class="t" style="left:76px;top:159px;color:#b2b2b2;font-size:12.5px;">map_cloud6</div>
<svg class="r" style="left:59px;top:176px;" width="14" height="15" viewBox="0 0 14 15"><path d="M6.6 0.3 L13 3.5 L13 11 L6.6 14.3 L0.2 11 L0.2 3.5 Z" fill="#60b2dc"/><path d="M0.2 3.5 L6.6 6.8 L13 3.5 M6.6 6.8 L6.6 14.3" fill="none" stroke="#1e1e1e" stroke-width="0.9"/></svg>
<div class="t" style="left:76px;top:175px;color:#b2b2b2;font-size:12.5px;">map_cloud7</div>
<svg class="r" style="left:59px;top:192px;" width="14" height="15" viewBox="0 0 14 15"><path d="M6.6 0.3 L13 3.5 L13 11 L6.6 14.3 L0.2 11 L0.2 3.5 Z" fill="#60b2dc"/><path d="M0.2 3.5 L6.6 6.8 L13 3.5 M6.6 6.8 L6.6 14.3" fill="none" stroke="#1e1e1e" stroke-width="0.9"/></svg>
<div class="t" style="left:76px;top:191px;color:#b2b2b2;font-size:12.5px;">map_cloud8</div>
<svg class="r" style="left:59px;top:208px;" width="14" height="15" viewBox="0 0 14 15"><path d="M6.6 0.3 L13 3.5 L13 11 L6.6 14.3 L0.2 11 L0.2 3.5 Z" fill="#60b2dc"/><path d="M0.2 3.5 L6.6 6.8 L13 3.5 M6.6 6.8 L6.6 14.3" fill="none" stroke="#1e1e1e" stroke-width="0.9"/></svg>
<div class="t" style="left:76px;top:207px;color:#b2b2b2;font-size:12.5px;">map_cloud9</div>
<svg class="r" style="left:59px;top:224px;" width="14" height="15" viewBox="0 0 14 15"><path d="M6.6 0.3 L13 3.5 L13 11 L6.6 14.3 L0.2 11 L0.2 3.5 Z" fill="#60b2dc"/><path d="M0.2 3.5 L6.6 6.8 L13 3.5 M6.6 6.8 L6.6 14.3" fill="none" stroke="#1e1e1e" stroke-width="0.9"/></svg>
<div class="t" style="left:76px;top:223px;color:#b2b2b2;font-size:12.5px;">map_cloud10</div>
<svg class="r" style="left:59px;top:240px;" width="14" height="15" viewBox="0 0 14 15"><path d="M6.6 0.3 L13 3.5 L13 11 L6.6 14.3 L0.2 11 L0.2 3.5 Z" fill="#60b2dc"/><path d="M0.2 3.5 L6.6 6.8 L13 3.5 M6.6 6.8 L6.6 14.3" fill="none" stroke="#1e1e1e" stroke-width="0.9"/></svg>
<div class="t" style="left:76px;top:239px;color:#b2b2b2;font-size:12.5px;">WorldBRMapManorLine</div>
<svg class="r" style="left:59px;top:256px;" width="14" height="15" viewBox="0 0 14 15"><path d="M6.6 0.3 L13 3.5 L13 11 L6.6 14.3 L0.2 11 L0.2 3.5 Z" fill="#60b2dc"/><path d="M0.2 3.5 L6.6 6.8 L13 3.5 M6.6 6.8 L6.6 14.3" fill="none" stroke="#1e1e1e" stroke-width="0.9"/></svg>
<div class="t" style="left:76px;top:255px;color:#b2b2b2;font-size:12.5px;">WorldMiniMapMaskSystem</div>
<svg class="r" style="left:19px;top:274.5px;" width="9" height="10" viewBox="0 0 9 10"><path d="M0.5 0.5 L8.5 5 L0.5 9.5 Z" fill="#5a5a5a"/></svg>
<svg class="r" style="left:32px;top:274px;" width="12" height="10" viewBox="0 0 12 10"><path d="M0 1 Q0 0 1 0 L6 0 L7.5 2 L11 2 Q12 2 12 3 L12 9 Q12 10 11 10 L1 10 Q0 10 0 9 Z" fill="#a2a2a2"/></svg>
<div class="t" style="left:48px;top:271px;color:#b2b2b2;font-size:12.5px;">BundleAssetsTest</div>
<svg class="r" style="left:19px;top:290.5px;" width="9" height="10" viewBox="0 0 9 10"><path d="M0.5 0.5 L8.5 5 L0.5 9.5 Z" fill="#5a5a5a"/></svg>
<svg class="r" style="left:32px;top:290px;" width="12" height="10" viewBox="0 0 12 10"><path d="M0 1 Q0 0 1 0 L6 0 L7.5 2 L11 2 Q12 2 12 3 L12 9 Q12 10 11 10 L1 10 Q0 10 0 9 Z" fill="#a2a2a2"/></svg>
<div class="t" style="left:48px;top:287px;color:#b2b2b2;font-size:12.5px;">Configs</div>
<svg class="r" style="left:19px;top:306.5px;" width="9" height="10" viewBox="0 0 9 10"><path d="M0.5 0.5 L8.5 5 L0.5 9.5 Z" fill="#5a5a5a"/></svg>
<svg class="r" style="left:32px;top:306px;" width="12" height="10" viewBox="0 0 12 10"><path d="M0 1 Q0 0 1 0 L6 0 L7.5 2 L11 2 Q12 2 12 3 L12 9 Q12 10 11 10 L1 10 Q0 10 0 9 Z" fill="#a2a2a2"/></svg>
<div class="t" style="left:48px;top:303px;color:#b2b2b2;font-size:12.5px;">Editor</div>
<svg class="r" style="left:19px;top:322.5px;" width="9" height="10" viewBox="0 0 9 10"><path d="M0.5 0.5 L8.5 5 L0.5 9.5 Z" fill="#5a5a5a"/></svg>
<svg class="r" style="left:32px;top:322px;" width="12" height="10" viewBox="0 0 12 10"><path d="M0 1 Q0 0 1 0 L6 0 L7.5 2 L11 2 Q12 2 12 3 L12 9 Q12 10 11 10 L1 10 Q0 10 0 9 Z" fill="#a2a2a2"/></svg>
<div class="t" style="left:48px;top:319px;color:#b2b2b2;font-size:12.5px;">Editor Default Resources</div>
<svg class="r" style="left:19px;top:338.5px;" width="9" height="10" viewBox="0 0 9 10"><path d="M0.5 0.5 L8.5 5 L0.5 9.5 Z" fill="#5a5a5a"/></svg>
<svg class="r" style="left:32px;top:338px;" width="12" height="10" viewBox="0 0 12 10"><path d="M0 1 Q0 0 1 0 L6 0 L7.5 2 L11 2 Q12 2 12 3 L12 9 Q12 10 11 10 L1 10 Q0 10 0 9 Z" fill="#a2a2a2"/></svg>
<div class="t" style="left:48px;top:335px;color:#b2b2b2;font-size:12.5px;">ExternalDependencyManager</div>
<svg class="r" style="left:19px;top:354.5px;" width="9" height="10" viewBox="0 0 9 10"><path d="M0.5 0.5 L8.5 5 L0.5 9.5 Z" fill="#5a5a5a"/></svg>
<svg class="r" style="left:32px;top:354px;" width="12" height="10" viewBox="0 0 12 10"><path d="M0 1 Q0 0 1 0 L6 0 L7.5 2 L11 2 Q12 2 12 3 L12 9 Q12 10 11 10 L1 10 Q0 10 0 9 Z" fill="#a2a2a2"/></svg>
<div class="t" style="left:48px;top:351px;color:#b2b2b2;font-size:12.5px;">FacebookSDK</div>
<svg class="r" style="left:19px;top:370.5px;" width="9" height="10" viewBox="0 0 9 10"><path d="M0.5 0.5 L8.5 5 L0.5 9.5 Z" fill="#5a5a5a"/></svg>
<svg class="r" style="left:32px;top:370px;" width="12" height="10" viewBox="0 0 12 10"><path d="M0 1 Q0 0 1 0 L6 0 L7.5 2 L11 2 Q12 2 12 3 L12 9 Q12 10 11 10 L1 10 Q0 10 0 9 Z" fill="#a2a2a2"/></svg>
<div class="t" style="left:48px;top:367px;color:#b2b2b2;font-size:12.5px;">Firebase</div>
<svg class="r" style="left:19px;top:386.5px;" width="9" height="10" viewBox="0 0 9 10"><path d="M0.5 0.5 L8.5 5 L0.5 9.5 Z" fill="#5a5a5a"/></svg>
<svg class="r" style="left:32px;top:386px;" width="12" height="10" viewBox="0 0 12 10"><path d="M0 1 Q0 0 1 0 L6 0 L7.5 2 L11 2 Q12 2 12 3 L12 9 Q12 10 11 10 L1 10 Q0 10 0 9 Z" fill="#a2a2a2"/></svg>
<div class="t" style="left:48px;top:383px;color:#b2b2b2;font-size:12.5px;">GoogleMobileAds</div>
<svg class="r" style="left:19px;top:402.5px;" width="9" height="10" viewBox="0 0 9 10"><path d="M0.5 0.5 L8.5 5 L0.5 9.5 Z" fill="#5a5a5a"/></svg>
<svg class="r" style="left:32px;top:402px;" width="12" height="10" viewBox="0 0 12 10"><path d="M0 1 Q0 0 1 0 L6 0 L7.5 2 L11 2 Q12 2 12 3 L12 9 Q12 10 11 10 L1 10 Q0 10 0 9 Z" fill="#a2a2a2"/></svg>
<div class="t" style="left:48px;top:399px;color:#b2b2b2;font-size:12.5px;">GPC</div>
<svg class="r" style="left:32px;top:418px;" width="12" height="10" viewBox="0 0 12 10"><path d="M0.5 0.5 L5.8 0.5 L7.3 2.5 L11.5 2.5 L11.5 9.5 L0.5 9.5 Z" fill="none" stroke="#a2a2a2" stroke-width="1"/></svg>
<div class="t" style="left:48px;top:415px;color:#b2b2b2;font-size:12.5px;">Hotfix</div>
<svg class="r" style="left:19px;top:434.5px;" width="9" height="10" viewBox="0 0 9 10"><path d="M0.5 0.5 L8.5 5 L0.5 9.5 Z" fill="#5a5a5a"/></svg>
<svg class="r" style="left:32px;top:434px;" width="12" height="10" viewBox="0 0 12 10"><path d="M0 1 Q0 0 1 0 L6 0 L7.5 2 L11 2 Q12 2 12 3 L12 9 Q12 10 11 10 L1 10 Q0 10 0 9 Z" fill="#a2a2a2"/></svg>
<div class="t" style="left:48px;top:431px;color:#b2b2b2;font-size:12.5px;">Localization</div>
<svg class="r" style="left:19px;top:450.5px;" width="9" height="10" viewBox="0 0 9 10"><path d="M0.5 0.5 L8.5 5 L0.5 9.5 Z" fill="#5a5a5a"/></svg>
<svg class="r" style="left:32px;top:450px;" width="12" height="10" viewBox="0 0 12 10"><path d="M0 1 Q0 0 1 0 L6 0 L7.5 2 L11 2 Q12 2 12 3 L12 9 Q12 10 11 10 L1 10 Q0 10 0 9 Z" fill="#a2a2a2"/></svg>
<div class="t" style="left:48px;top:447px;color:#b2b2b2;font-size:12.5px;">Packages</div>
<svg class="r" style="left:19px;top:466.5px;" width="9" height="10" viewBox="0 0 9 10"><path d="M0.5 0.5 L8.5 5 L0.5 9.5 Z" fill="#5a5a5a"/></svg>
<svg class="r" style="left:32px;top:466px;" width="12" height="10" viewBox="0 0 12 10"><path d="M0 1 Q0 0 1 0 L6 0 L7.5 2 L11 2 Q12 2 12 3 L12 9 Q12 10 11 10 L1 10 Q0 10 0 9 Z" fill="#a2a2a2"/></svg>
<div class="t" style="left:48px;top:463px;color:#b2b2b2;font-size:12.5px;">Parse</div>
<svg class="r" style="left:19px;top:482.5px;" width="9" height="10" viewBox="0 0 9 10"><path d="M0.5 0.5 L8.5 5 L0.5 9.5 Z" fill="#5a5a5a"/></svg>
<svg class="r" style="left:32px;top:482px;" width="12" height="10" viewBox="0 0 12 10"><path d="M0 1 Q0 0 1 0 L6 0 L7.5 2 L11 2 Q12 2 12 3 L12 9 Q12 10 11 10 L1 10 Q0 10 0 9 Z" fill="#a2a2a2"/></svg>
<div class="t" style="left:48px;top:479px;color:#b2b2b2;font-size:12.5px;">Plugins</div>
<svg class="r" style="left:19px;top:498.5px;" width="9" height="10" viewBox="0 0 9 10"><path d="M0.5 0.5 L8.5 5 L0.5 9.5 Z" fill="#5a5a5a"/></svg>
<svg class="r" style="left:32px;top:498px;" width="12" height="10" viewBox="0 0 12 10"><path d="M0 1 Q0 0 1 0 L6 0 L7.5 2 L11 2 Q12 2 12 3 L12 9 Q12 10 11 10 L1 10 Q0 10 0 9 Z" fill="#a2a2a2"/></svg>
<div class="t" style="left:48px;top:495px;color:#b2b2b2;font-size:12.5px;">Protocol</div>
<svg class="r" style="left:19px;top:514.5px;" width="9" height="10" viewBox="0 0 9 10"><path d="M0.5 0.5 L8.5 5 L0.5 9.5 Z" fill="#5a5a5a"/></svg>
<svg class="r" style="left:32px;top:514px;" width="12" height="10" viewBox="0 0 12 10"><path d="M0 1 Q0 0 1 0 L6 0 L7.5 2 L11 2 Q12 2 12 3 L12 9 Q12 10 11 10 L1 10 Q0 10 0 9 Z" fill="#a2a2a2"/></svg>
<div class="t" style="left:48px;top:511px;color:#b2b2b2;font-size:12.5px;">Resources</div>
<svg class="r" style="left:18.5px;top:531px;" width="10" height="9" viewBox="0 0 10 9"><path d="M0.5 0.5 L9.5 0.5 L5 8.5 Z" fill="#5c5c5c"/></svg>
<svg class="r" style="left:32px;top:530px;" width="14" height="10" viewBox="0 0 14 10"><path d="M0.5 9.5 L0.5 0.5 L5.5 0.5 L7 2.3 L11 2.3 L11 3.5" fill="none" stroke="#a2a2a2" stroke-width="1"/><path d="M2.6 4.3 L13.4 4.3 L11.3 10 L0.3 10 Z" fill="#a2a2a2"/></svg>
<div class="t" style="left:48px;top:527px;color:#b2b2b2;font-size:12.5px;">Scripts</div>
<svg class="r" style="left:32.5px;top:547px;" width="10" height="9" viewBox="0 0 10 9"><path d="M0.5 0.5 L9.5 0.5 L5 8.5 Z" fill="#5c5c5c"/></svg>
<svg class="r" style="left:46px;top:546px;" width="14" height="10" viewBox="0 0 14 10"><path d="M0.5 9.5 L0.5 0.5 L5.5 0.5 L7 2.3 L11 2.3 L11 3.5" fill="none" stroke="#a2a2a2" stroke-width="1"/><path d="M2.6 4.3 L13.4 4.3 L11.3 10 L0.3 10 Z" fill="#a2a2a2"/></svg>
<div class="t" style="left:62px;top:543px;color:#b2b2b2;font-size:12.5px;">Client</div>
<svg class="r" style="left:47px;top:562.5px;" width="9" height="10" viewBox="0 0 9 10"><path d="M0.5 0.5 L8.5 5 L0.5 9.5 Z" fill="#5a5a5a"/></svg>
<svg class="r" style="left:60px;top:562px;" width="12" height="10" viewBox="0 0 12 10"><path d="M0 1 Q0 0 1 0 L6 0 L7.5 2 L11 2 Q12 2 12 3 L12 9 Q12 10 11 10 L1 10 Q0 10 0 9 Z" fill="#a2a2a2"/></svg>
<div class="t" style="left:76px;top:559px;color:#b2b2b2;font-size:12.5px;">3rdParty</div>
<svg class="r" style="left:47px;top:578.5px;" width="9" height="10" viewBox="0 0 9 10"><path d="M0.5 0.5 L8.5 5 L0.5 9.5 Z" fill="#5a5a5a"/></svg>
<svg class="r" style="left:60px;top:578px;" width="12" height="10" viewBox="0 0 12 10"><path d="M0 1 Q0 0 1 0 L6 0 L7.5 2 L11 2 Q12 2 12 3 L12 9 Q12 10 11 10 L1 10 Q0 10 0 9 Z" fill="#a2a2a2"/></svg>
<div class="t" style="left:76px;top:575px;color:#b2b2b2;font-size:12.5px;">Account</div>
<svg class="r" style="left:47px;top:594.5px;" width="9" height="10" viewBox="0 0 9 10"><path d="M0.5 0.5 L8.5 5 L0.5 9.5 Z" fill="#5a5a5a"/></svg>
<svg class="r" style="left:60px;top:594px;" width="12" height="10" viewBox="0 0 12 10"><path d="M0 1 Q0 0 1 0 L6 0 L7.5 2 L11 2 Q12 2 12 3 L12 9 Q12 10 11 10 L1 10 Q0 10 0 9 Z" fill="#a2a2a2"/></svg>
<div class="t" style="left:76px;top:591px;color:#b2b2b2;font-size:12.5px;">Behavior Designer</div>
<svg class="r" style="left:47px;top:610.5px;" width="9" height="10" viewBox="0 0 9 10"><path d="M0.5 0.5 L8.5 5 L0.5 9.5 Z" fill="#5a5a5a"/></svg>
<svg class="r" style="left:60px;top:610px;" width="12" height="10" viewBox="0 0 12 10"><path d="M0 1 Q0 0 1 0 L6 0 L7.5 2 L11 2 Q12 2 12 3 L12 9 Q12 10 11 10 L1 10 Q0 10 0 9 Z" fill="#a2a2a2"/></svg>
<div class="t" style="left:76px;top:607px;color:#b2b2b2;font-size:12.5px;">CityManager</div>
<svg class="r" style="left:47px;top:626.5px;" width="9" height="10" viewBox="0 0 9 10"><path d="M0.5 0.5 L8.5 5 L0.5 9.5 Z" fill="#5a5a5a"/></svg>
<svg class="r" style="left:60px;top:626px;" width="12" height="10" viewBox="0 0 12 10"><path d="M0 1 Q0 0 1 0 L6 0 L7.5 2 L11 2 Q12 2 12 3 L12 9 Q12 10 11 10 L1 10 Q0 10 0 9 Z" fill="#a2a2a2"/></svg>
<div class="t" style="left:76px;top:623px;color:#b2b2b2;font-size:12.5px;">Common</div>
<svg class="r" style="left:47px;top:642.5px;" width="9" height="10" viewBox="0 0 9 10"><path d="M0.5 0.5 L8.5 5 L0.5 9.5 Z" fill="#5a5a5a"/></svg>
<svg class="r" style="left:60px;top:642px;" width="12" height="10" viewBox="0 0 12 10"><path d="M0 1 Q0 0 1 0 L6 0 L7.5 2 L11 2 Q12 2 12 3 L12 9 Q12 10 11 10 L1 10 Q0 10 0 9 Z" fill="#a2a2a2"/></svg>
<div class="t" style="left:76px;top:639px;color:#b2b2b2;font-size:12.5px;">Components</div>
<svg class="r" style="left:47px;top:658.5px;" width="9" height="10" viewBox="0 0 9 10"><path d="M0.5 0.5 L8.5 5 L0.5 9.5 Z" fill="#5a5a5a"/></svg>
<svg class="r" style="left:60px;top:658px;" width="12" height="10" viewBox="0 0 12 10"><path d="M0 1 Q0 0 1 0 L6 0 L7.5 2 L11 2 Q12 2 12 3 L12 9 Q12 10 11 10 L1 10 Q0 10 0 9 Z" fill="#a2a2a2"/></svg>
<div class="t" style="left:76px;top:655px;color:#b2b2b2;font-size:12.5px;">Config</div>
<svg class="r" style="left:47px;top:674.5px;" width="9" height="10" viewBox="0 0 9 10"><path d="M0.5 0.5 L8.5 5 L0.5 9.5 Z" fill="#5a5a5a"/></svg>
<svg class="r" style="left:60px;top:674px;" width="12" height="10" viewBox="0 0 12 10"><path d="M0 1 Q0 0 1 0 L6 0 L7.5 2 L11 2 Q12 2 12 3 L12 9 Q12 10 11 10 L1 10 Q0 10 0 9 Z" fill="#a2a2a2"/></svg>
<div class="t" style="left:76px;top:671px;color:#b2b2b2;font-size:12.5px;">FormationLogic</div>
<svg class="r" style="left:47px;top:690.5px;" width="9" height="10" viewBox="0 0 9 10"><path d="M0.5 0.5 L8.5 5 L0.5 9.5 Z" fill="#5a5a5a"/></svg>
<svg class="r" style="left:60px;top:690px;" width="12" height="10" viewBox="0 0 12 10"><path d="M0 1 Q0 0 1 0 L6 0 L7.5 2 L11 2 Q12 2 12 3 L12 9 Q12 10 11 10 L1 10 Q0 10 0 9 Z" fill="#a2a2a2"/></svg>
<div class="t" style="left:76px;top:687px;color:#b2b2b2;font-size:12.5px;">HUDManager</div>
<svg class="r" style="left:47px;top:706.5px;" width="9" height="10" viewBox="0 0 9 10"><path d="M0.5 0.5 L8.5 5 L0.5 9.5 Z" fill="#5a5a5a"/></svg>
<svg class="r" style="left:60px;top:706px;" width="12" height="10" viewBox="0 0 12 10"><path d="M0 1 Q0 0 1 0 L6 0 L7.5 2 L11 2 Q12 2 12 3 L12 9 Q12 10 11 10 L1 10 Q0 10 0 9 Z" fill="#a2a2a2"/></svg>
<div class="t" style="left:76px;top:703px;color:#b2b2b2;font-size:12.5px;">InputManager</div>
<svg class="r" style="left:47px;top:722.5px;" width="9" height="10" viewBox="0 0 9 10"><path d="M0.5 0.5 L8.5 5 L0.5 9.5 Z" fill="#5a5a5a"/></svg>
<svg class="r" style="left:60px;top:722px;" width="12" height="10" viewBox="0 0 12 10"><path d="M0 1 Q0 0 1 0 L6 0 L7.5 2 L11 2 Q12 2 12 3 L12 9 Q12 10 11 10 L1 10 Q0 10 0 9 Z" fill="#a2a2a2"/></svg>
<div class="t" style="left:76px;top:719px;color:#b2b2b2;font-size:12.5px;">Job</div>
<svg class="r" style="left:47px;top:738.5px;" width="9" height="10" viewBox="0 0 9 10"><path d="M0.5 0.5 L8.5 5 L0.5 9.5 Z" fill="#5a5a5a"/></svg>
<svg class="r" style="left:60px;top:738px;" width="12" height="10" viewBox="0 0 12 10"><path d="M0 1 Q0 0 1 0 L6 0 L7.5 2 L11 2 Q12 2 12 3 L12 9 Q12 10 11 10 L1 10 Q0 10 0 9 Z" fill="#a2a2a2"/></svg>
<div class="t" style="left:76px;top:735px;color:#b2b2b2;font-size:12.5px;">LightingManager</div>
<div class="r" style="left:0px;top:0px;width:230px;height:5px;background:#3c3c3c;"></div>
<div class="r" style="left:0px;top:5px;width:230px;height:1px;background:#1e1e1e;"></div>
<div class="r" style="left:46px;top:0px;width:95px;height:3px;background:#1e1e1e;border-radius:0 0 4px 4px;"></div>
<div class="r" style="left:145px;top:0px;width:1px;height:4px;background:#2a2a2a;"></div>
<div class="r" style="left:170px;top:0px;width:1px;height:4px;background:#2a2a2a;"></div>
<div class="r" style="left:197px;top:0px;width:1px;height:4px;background:#2a2a2a;"></div>
<div class="r" style="left:13px;top:0px;width:3px;height:2px;background:#c0c0c0;"></div>
<div class="r" style="left:154px;top:0px;width:3px;height:2px;background:#a0a0a0;"></div>
<div class="r" style="left:217px;top:5px;width:13px;height:746px;background:#2c2c2c;"></div>
<div class="r" style="left:217px;top:5px;width:1px;height:746px;background:#262626;"></div>
<svg class="r" style="left:220px;top:11px;" width="8" height="6" viewBox="0 0 8 6"><path d="M0 5.5 L4 0.5 L8 5.5 Z" fill="#a0a0a0"/></svg>
<div class="r" style="left:219px;top:381px;width:10px;height:109px;background:#4e4e4e;border-radius:5px;"></div>
</div>
<div class="r" style="left:610px;top:0px;width:2px;height:751px;background:#141414;"></div>
<div class="clip" style="left:612px;top:0;width:500px;height:751px;background:#2e2e2e">
<svg class="r" style="left:8px;top:-4px;" width="20" height="20" viewBox="0 0 20 20"><g fill="none" stroke="#c4c4c4" stroke-width="1.3" stroke-linejoin="round"><path d="M10 0.7 L19 5 L19 14.5 L10 19 L1 14.5 L1 5 Z"/><path d="M1 5 L10 9.5 L19 5 M10 9.5 L10 19"/></g></svg>
<svg class="r" style="left:27px;top:16px;" width="8" height="5" viewBox="0 0 8 5"><path d="M0 0.2 L7 0.2 L3.5 4.5 Z" fill="#b0b0b0"/></svg>
<div class="r" style="left:46px;top:-4px;width:14px;height:14px;background:#212121;border-radius:3px;box-sizing:border-box;border:1px solid #191919;"></div>
<svg class="r" style="left:48px;top:-1px;" width="10" height="8" viewBox="0 0 10 8"><path d="M1 4 L3.8 6.8 L9 1.2" fill="none" stroke="#d0d0d0" stroke-width="1.6"/></svg>
<div class="r" style="left:66px;top:-5px;width:364px;height:17px;background:#232323;border-radius:3px;"></div>
<div class="t" style="left:69px;top:-4px;color:#bbbbbb;font-size:12.5px;font-weight:bold;">UITopCam</div>
<div class="r" style="left:433px;top:-4px;width:14px;height:14px;background:#212121;border-radius:3px;box-sizing:border-box;border:1px solid #191919;"></div>
<div class="t" style="left:451px;top:-4px;color:#bbbbbb;font-size:12.5px;">Static</div>
<svg class="r" style="left:486px;top:1px;" width="8" height="5" viewBox="0 0 8 5"><path d="M0 0.2 L8 0.2 L4 4.5 Z" fill="#c0c0c0"/></svg>
<div class="t" style="left:42px;top:19.5px;color:#bbbbbb;font-size:12.5px;">Tag</div>
<div class="r" style="left:69px;top:19px;width:193px;height:16px;background:#424242;border-radius:3px;box-shadow:0 1px 0 #1e1e1e,0 -1px 0 #242424;"></div>
<div class="t" style="left:72px;top:19.0px;color:#bbbbbb;font-size:12.5px;">Untagged</div>
<svg class="r" style="left:249px;top:25.0px;" width="8" height="5" viewBox="0 0 8 5"><path d="M0 0.2 L8 0.2 L4 4.8 Z" fill="#c0c0c0"/></svg>
<div class="t" style="left:275px;top:19.5px;color:#bbbbbb;font-size:12.5px;">Layer</div>
<div class="r" style="left:312px;top:19px;width:183px;height:16px;background:#424242;border-radius:3px;box-shadow:0 1px 0 #1e1e1e,0 -1px 0 #242424;"></div>
<div class="t" style="left:315px;top:19.0px;color:#bbbbbb;font-size:12.5px;">UI</div>
<svg class="r" style="left:482px;top:25.0px;" width="8" height="5" viewBox="0 0 8 5"><path d="M0 0.2 L8 0.2 L4 4.8 Z" fill="#c0c0c0"/></svg>
<div class="r" style="left:0px;top:43px;width:500px;height:2px;background:#1a1a1a;"></div>
<div class="r" style="left:0px;top:45px;width:500px;height:20px;background:#323232;"></div>
<div class="r" style="left:0px;top:65px;width:500px;height:1px;background:#262626;"></div>
<svg class="r" style="left:5.0px;top:51px;" width="10" height="9" viewBox="0 0 10 9"><path d="M0.5 0.5 L9.5 0.5 L5 8.5 Z" fill="#5c5c5c"/></svg>
<svg class="r" style="left:21px;top:49px;" width="15" height="13" viewBox="0 0 15 13"><g stroke-linecap="round" stroke-width="2.2"><path d="M7.5 1 V5.5" stroke="#8fd04a"/><path d="M6.3 7.8 L2 10.3" stroke="#4aa6dc"/><path d="M8.7 7.8 L13 10.3" stroke="#e4673a"/></g></svg>
<div class="t" style="left:61px;top:48px;color:#b4b4b4;font-size:12.5px;font-weight:bold;">Transform</div>
<svg class="r" style="left:442px;top:50px;" width="10" height="10" viewBox="0 0 10 10"><circle cx="5" cy="5" r="5" fill="#a8a8a8"/><path d="M3.3 3.9 Q3.3 2.2 5 2.2 Q6.8 2.2 6.8 3.8 Q6.8 4.8 5.6 5.3 Q5 5.6 5 6.4" fill="none" stroke="#323232" stroke-width="1.4"/><rect x="4.3" y="7.2" width="1.4" height="1.4" fill="#323232"/></svg>
<svg class="r" style="left:462px;top:50px;" width="11" height="11" viewBox="0 0 11 11"><g fill="#a8a8a8"><rect x="0" y="2" width="6" height="1.3"/><rect x="7" y="0" width="2" height="4.5"/><rect x="9" y="2" width="2" height="1.3"/><rect x="0" y="7" width="1.5" height="1.3"/><rect x="3" y="5" width="2" height="4.8"/><rect x="5" y="7" width="6" height="1.3"/></g></svg>
<svg class="r" style="left:486px;top:50px;" width="2" height="10" viewBox="0 0 2 10"><rect x="0" y="0" width="2" height="2" fill="#a4a4a4"/><rect x="0" y="4" width="2" height="2" fill="#a4a4a4"/><rect x="0" y="8" width="2" height="2" fill="#a4a4a4"/></svg>
<div class="t" style="left:19px;top:72px;color:#bbbbbb;font-size:12.5px;">Position</div>
<div class="t" style="left:206px;top:72px;color:#bbbbbb;font-size:12.5px;">X</div>
<div class="r" style="left:218px;top:70px;width:81px;height:17px;background:#232323;border-radius:3px;box-sizing:border-box;border:1px solid #1b1b1b;border-top-color:#161616;"></div>
<div class="t" style="left:221px;top:72.0px;color:#bbbbbb;font-size:12.5px;">0</div>
<div class="t" style="left:305px;top:72px;color:#bbbbbb;font-size:12.5px;">Y</div>
<div class="r" style="left:317px;top:70px;width:80px;height:17px;background:#232323;border-radius:3px;box-sizing:border-box;border:1px solid #1b1b1b;border-top-color:#161616;"></div>
<div class="t" style="left:320px;top:72.0px;color:#bbbbbb;font-size:12.5px;">0</div>
<div class="t" style="left:404px;top:72px;color:#bbbbbb;font-size:12.5px;">Z</div>
<div class="r" style="left:415px;top:70px;width:80px;height:17px;background:#232323;border-radius:3px;box-sizing:border-box;border:1px solid #1b1b1b;border-top-color:#161616;"></div>
<div class="t" style="left:418px;top:72.0px;color:#bbbbbb;font-size:12.5px;">-573</div>
<div class="t" style="left:19px;top:92px;color:#bbbbbb;font-size:12.5px;">Rotation</div>
<div class="t" style="left:206px;top:92px;color:#bbbbbb;font-size:12.5px;">X</div>
<div class="r" style="left:218px;top:90px;width:81px;height:17px;background:#232323;border-radius:3px;box-sizing:border-box;border:1px solid #1b1b1b;border-top-color:#161616;"></div>
<div class="t" style="left:221px;top:92.0px;color:#bbbbbb;font-size:12.5px;">0</div>
<div class="t" style="left:305px;top:92px;color:#bbbbbb;font-size:12.5px;">Y</div>
<div class="r" style="left:317px;top:90px;width:80px;height:17px;background:#232323;border-radius:3px;box-sizing:border-box;border:1px solid #1b1b1b;border-top-color:#161616;"></div>
<div class="t" style="left:320px;top:92.0px;color:#bbbbbb;font-size:12.5px;">0</div>
<div class="t" style="left:404px;top:92px;color:#bbbbbb;font-size:12.5px;">Z</div>
<div class="r" style="left:415px;top:90px;width:80px;height:17px;background:#232323;border-radius:3px;box-sizing:border-box;border:1px solid #1b1b1b;border-top-color:#161616;"></div>
<div class="t" style="left:418px;top:92.0px;color:#bbbbbb;font-size:12.5px;">0</div>
<div class="t" style="left:19px;top:112px;color:#bbbbbb;font-size:12.5px;">Scale</div>
<div class="t" style="left:206px;top:112px;color:#bbbbbb;font-size:12.5px;">X</div>
<div class="r" style="left:218px;top:110px;width:81px;height:17px;background:#232323;border-radius:3px;box-sizing:border-box;border:1px solid #1b1b1b;border-top-color:#161616;"></div>
<div class="t" style="left:221px;top:112.0px;color:#bbbbbb;font-size:12.5px;">1</div>
<div class="t" style="left:305px;top:112px;color:#bbbbbb;font-size:12.5px;">Y</div>
<div class="r" style="left:317px;top:110px;width:80px;height:17px;background:#232323;border-radius:3px;box-sizing:border-box;border:1px solid #1b1b1b;border-top-color:#161616;"></div>
<div class="t" style="left:320px;top:112.0px;color:#bbbbbb;font-size:12.5px;">1</div>
<div class="t" style="left:404px;top:112px;color:#bbbbbb;font-size:12.5px;">Z</div>
<div class="r" style="left:415px;top:110px;width:80px;height:17px;background:#232323;border-radius:3px;box-sizing:border-box;border:1px solid #1b1b1b;border-top-color:#161616;"></div>
<div class="t" style="left:418px;top:112.0px;color:#bbbbbb;font-size:12.5px;">1</div>
<div class="r" style="left:0px;top:135px;width:500px;height:1px;background:#1a1a1a;"></div>
<div class="r" style="left:0px;top:136px;width:500px;height:20px;background:#323232;"></div>
<div class="r" style="left:0px;top:156px;width:500px;height:1px;background:#262626;"></div>
<svg class="r" style="left:5.0px;top:142px;" width="10" height="9" viewBox="0 0 10 9"><path d="M0.5 0.5 L9.5 0.5 L5 8.5 Z" fill="#5c5c5c"/></svg>
<svg class="r" style="left:22px;top:142px;" width="13" height="9" viewBox="0 0 13 9"><rect x="0" y="0.3" width="8.3" height="8.2" rx="1.3" fill="#60aed6"/><path d="M9 3.3 L12.2 0.8 L12.2 8 L9 5.2 Z" fill="#60aed6"/></svg>
<div class="r" style="left:40px;top:139px;width:14px;height:14px;background:#212121;border-radius:3px;box-sizing:border-box;border:1px solid #191919;"></div>
<svg class="r" style="left:42px;top:142px;" width="10" height="8" viewBox="0 0 10 8"><path d="M1 4 L3.8 6.8 L9 1.2" fill="none" stroke="#d0d0d0" stroke-width="1.6"/></svg>
<div class="t" style="left:61px;top:139px;color:#b4b4b4;font-size:12.5px;font-weight:bold;">Camera</div>
<svg class="r" style="left:442px;top:141px;" width="10" height="10" viewBox="0 0 10 10"><circle cx="5" cy="5" r="5" fill="#a8a8a8"/><path d="M3.3 3.9 Q3.3 2.2 5 2.2 Q6.8 2.2 6.8 3.8 Q6.8 4.8 5.6 5.3 Q5 5.6 5 6.4" fill="none" stroke="#323232" stroke-width="1.4"/><rect x="4.3" y="7.2" width="1.4" height="1.4" fill="#323232"/></svg>
<svg class="r" style="left:462px;top:141px;" width="11" height="11" viewBox="0 0 11 11"><g fill="#a8a8a8"><rect x="0" y="2" width="6" height="1.3"/><rect x="7" y="0" width="2" height="4.5"/><rect x="9" y="2" width="2" height="1.3"/><rect x="0" y="7" width="1.5" height="1.3"/><rect x="3" y="5" width="2" height="4.8"/><rect x="5" y="7" width="6" height="1.3"/></g></svg>
<svg class="r" style="left:486px;top:141px;" width="2" height="10" viewBox="0 0 2 10"><rect x="0" y="0" width="2" height="2" fill="#a4a4a4"/><rect x="0" y="4" width="2" height="2" fill="#a4a4a4"/><rect x="0" y="8" width="2" height="2" fill="#a4a4a4"/></svg>
<div class="t" style="left:19px;top:163px;color:#bbbbbb;font-size:12.5px;">Clear Flags</div>
<div class="r" style="left:206px;top:162px;width:289px;height:16px;background:#424242;border-radius:3px;box-shadow:0 1px 0 #1e1e1e,0 -1px 0 #242424;"></div>
<div class="t" style="left:209px;top:162.0px;color:#bbbbbb;font-size:12.5px;">Depth only</div>
<svg class="r" style="left:482px;top:168.0px;" width="8" height="5" viewBox="0 0 8 5"><path d="M0 0.2 L8 0.2 L4 4.8 Z" fill="#c0c0c0"/></svg>
<div class="t" style="left:19px;top:183px;color:#bbbbbb;font-size:12.5px;">Culling Mask</div>
<div class="r" style="left:206px;top:182px;width:289px;height:16px;background:#424242;border-radius:3px;box-shadow:0 1px 0 #1e1e1e,0 -1px 0 #242424;"></div>
<div class="t" style="left:209px;top:182.0px;color:#bbbbbb;font-size:12.5px;">UI</div>
<svg class="r" style="left:482px;top:188.0px;" width="8" height="5" viewBox="0 0 8 5"><path d="M0 0.2 L8 0.2 L4 4.8 Z" fill="#c0c0c0"/></svg>
<div class="t" style="left:19px;top:211px;color:#bbbbbb;font-size:12.5px;">Projection</div>
<div class="r" style="left:206px;top:210px;width:289px;height:16px;background:#424242;border-radius:3px;box-shadow:0 1px 0 #1e1e1e,0 -1px 0 #242424;"></div>
<div class="t" style="left:209px;top:210.0px;color:#bbbbbb;font-size:12.5px;">Orthographic</div>
<svg class="r" style="left:482px;top:216.0px;" width="8" height="5" viewBox="0 0 8 5"><path d="M0 0.2 L8 0.2 L4 4.8 Z" fill="#c0c0c0"/></svg>
<div class="t" style="left:19px;top:231px;color:#bbbbbb;font-size:12.5px;">Size</div>
<div class="r" style="left:205px;top:229px;width:290px;height:17px;background:#232323;border-radius:3px;box-sizing:border-box;border:1px solid #1b1b1b;border-top-color:#161616;"></div>
<div class="t" style="left:208px;top:231.0px;color:#bbbbbb;font-size:12.5px;">5</div>
<div class="t" style="left:19px;top:251px;color:#bbbbbb;font-size:12.5px;">Clipping Planes</div>
<div class="t" style="left:19px;top:291px;color:#bbbbbb;font-size:12.5px;">Viewport Rect</div>
<div class="t" style="left:19px;top:339px;color:#bbbbbb;font-size:12.5px;">Depth</div>
<div class="r" style="left:205px;top:337px;width:290px;height:17px;background:#232323;border-radius:3px;box-sizing:border-box;border:1px solid #1b1b1b;border-top-color:#161616;"></div>
<div class="t" style="left:208px;top:339.0px;color:#bbbbbb;font-size:12.5px;">3</div>
<div class="t" style="left:19px;top:359px;color:#bbbbbb;font-size:12.5px;">Rendering Path</div>
<div class="r" style="left:206px;top:358px;width:289px;height:16px;background:#424242;border-radius:3px;box-shadow:0 1px 0 #1e1e1e,0 -1px 0 #242424;"></div>
<div class="t" style="left:209px;top:358.0px;color:#bbbbbb;font-size:12.5px;">Use Graphics Settings</div>
<svg class="r" style="left:482px;top:364.0px;" width="8" height="5" viewBox="0 0 8 5"><path d="M0 0.2 L8 0.2 L4 4.8 Z" fill="#c0c0c0"/></svg>
<div class="t" style="left:19px;top:379px;color:#bbbbbb;font-size:12.5px;">Target Texture</div>
<div class="r" style="left:205px;top:377px;width:290px;height:17px;background:#232323;border-radius:3px;box-sizing:border-box;border:1px solid #1b1b1b;border-top-color:#161616;"></div>
<div class="t" style="left:208px;top:379.0px;color:#bbbbbb;font-size:12.5px;">None (Render Texture)</div>
<div class="r" style="left:477px;top:378px;width:18px;height:16px;background:#2a2a2a;border-radius:3px;"></div>
<svg class="r" style="left:480px;top:380px;" width="12" height="12" viewBox="0 0 12 12"><circle cx="6" cy="6" r="4.7" fill="none" stroke="#bcbcbc" stroke-width="1"/><circle cx="6" cy="6" r="1.6" fill="#b0b0b0"/></svg>
<div class="t" style="left:19px;top:399px;color:#bbbbbb;font-size:12.5px;">Occlusion Culling</div>
<div class="r" style="left:205px;top:399px;width:14px;height:14px;background:#212121;border-radius:3px;box-sizing:border-box;border:1px solid #191919;"></div>
<div class="t" style="left:19px;top:419px;color:#bbbbbb;font-size:12.5px;">HDR</div>
<div class="r" style="left:206px;top:418px;width:289px;height:16px;background:#424242;border-radius:3px;box-shadow:0 1px 0 #1e1e1e,0 -1px 0 #242424;"></div>
<div class="t" style="left:209px;top:418.0px;color:#bbbbbb;font-size:12.5px;">Off</div>
<svg class="r" style="left:482px;top:424.0px;" width="8" height="5" viewBox="0 0 8 5"><path d="M0 0.2 L8 0.2 L4 4.8 Z" fill="#c0c0c0"/></svg>
<div class="t" style="left:19px;top:439px;color:#bbbbbb;font-size:12.5px;">MSAA</div>
<div class="r" style="left:206px;top:438px;width:289px;height:16px;background:#424242;border-radius:3px;box-shadow:0 1px 0 #1e1e1e,0 -1px 0 #242424;"></div>
<div class="t" style="left:209px;top:438.0px;color:#bbbbbb;font-size:12.5px;">Off</div>
<svg class="r" style="left:482px;top:444.0px;" width="8" height="5" viewBox="0 0 8 5"><path d="M0 0.2 L8 0.2 L4 4.8 Z" fill="#c0c0c0"/></svg>
<div class="t" style="left:19px;top:459px;color:#bbbbbb;font-size:12.5px;">Allow Dynamic Resolution</div>
<div class="r" style="left:205px;top:459px;width:14px;height:14px;background:#212121;border-radius:3px;box-sizing:border-box;border:1px solid #191919;"></div>
<div class="t" style="left:19px;top:487px;color:#bbbbbb;font-size:12.5px;">Target Display</div>
<div class="r" style="left:206px;top:486px;width:289px;height:16px;background:#424242;border-radius:3px;box-shadow:0 1px 0 #1e1e1e,0 -1px 0 #242424;"></div>
<div class="t" style="left:209px;top:486.0px;color:#bbbbbb;font-size:12.5px;">Display 1</div>
<svg class="r" style="left:482px;top:492.0px;" width="8" height="5" viewBox="0 0 8 5"><path d="M0 0.2 L8 0.2 L4 4.8 Z" fill="#c0c0c0"/></svg>
<div class="t" style="left:206px;top:251px;color:#bbbbbb;font-size:12.5px;">Near</div>
<div class="r" style="left:242px;top:250px;width:253px;height:17px;background:#232323;border-radius:3px;box-sizing:border-box;border:1px solid #1b1b1b;border-top-color:#161616;"></div>
<div class="t" style="left:245px;top:251.0px;color:#bbbbbb;font-size:12.5px;">0.3</div>
<div class="t" style="left:206px;top:271px;color:#bbbbbb;font-size:12.5px;">Far</div>
<div class="r" style="left:242px;top:270px;width:253px;height:17px;background:#232323;border-radius:3px;box-sizing:border-box;border:1px solid #1b1b1b;border-top-color:#161616;"></div>
<div class="t" style="left:245px;top:271.0px;color:#bbbbbb;font-size:12.5px;">10</div>
<div class="t" style="left:210px;top:291px;color:#bbbbbb;font-size:12.5px;">X</div>
<div class="r" style="left:220px;top:290px;width:79px;height:17px;background:#232323;border-radius:3px;box-sizing:border-box;border:1px solid #1b1b1b;border-top-color:#161616;"></div>
<div class="t" style="left:223px;top:291.0px;color:#bbbbbb;font-size:12.5px;">0</div>
<div class="t" style="left:309px;top:291px;color:#bbbbbb;font-size:12.5px;">Y</div>
<div class="r" style="left:319px;top:290px;width:79px;height:17px;background:#232323;border-radius:3px;box-sizing:border-box;border:1px solid #1b1b1b;border-top-color:#161616;"></div>
<div class="t" style="left:322px;top:291.0px;color:#bbbbbb;font-size:12.5px;">0</div>
<div class="t" style="left:207px;top:310px;color:#bbbbbb;font-size:12.5px;">W</div>
<div class="r" style="left:220px;top:310px;width:79px;height:17px;background:#232323;border-radius:3px;box-sizing:border-box;border:1px solid #1b1b1b;border-top-color:#161616;"></div>
<div class="t" style="left:223px;top:311.0px;color:#bbbbbb;font-size:12.5px;">1</div>
<div class="t" style="left:309px;top:310px;color:#bbbbbb;font-size:12.5px;">H</div>
<div class="r" style="left:319px;top:310px;width:79px;height:17px;background:#232323;border-radius:3px;box-sizing:border-box;border:1px solid #1b1b1b;border-top-color:#161616;"></div>
<div class="t" style="left:322px;top:311.0px;color:#bbbbbb;font-size:12.5px;">1</div>
<div class="r" style="left:206px;top:505px;width:289px;height:2px;background:#3a3a3a;"></div>
<div class="r" style="left:490px;top:183px;width:14px;height:58px;background:#2b3342;border-radius:3px;box-sizing:border-box;border:1px solid #414b5a;"></div>
<svg class="r" style="left:490px;top:183px;" width="10" height="58" viewBox="0 0 10 58"><rect x="3" y="6" width="5" height="1" fill="#1b1f27"/><rect x="3" y="8" width="5" height="1" fill="#1b1f27"/><rect x="3" y="10" width="5" height="1" fill="#1b1f27"/><rect x="3" y="12" width="5" height="1" fill="#1b1f27"/><rect x="3" y="14" width="5" height="1" fill="#1b1f27"/><rect x="3" y="16" width="5" height="1" fill="#1b1f27"/><rect x="3" y="18" width="5" height="1" fill="#1b1f27"/><rect x="3" y="20" width="5" height="1" fill="#1b1f27"/><rect x="3" y="22" width="5" height="1" fill="#1b1f27"/><rect x="3" y="24" width="5" height="1" fill="#1b1f27"/><rect x="3" y="26" width="5" height="1" fill="#1b1f27"/><rect x="3" y="28" width="5" height="1" fill="#1b1f27"/><rect x="3" y="30" width="5" height="1" fill="#1b1f27"/><rect x="3" y="35" width="5" height="1.2" fill="#a4d65e"/><rect x="3" y="37" width="5" height="1.2" fill="#9ad466"/><rect x="3" y="39" width="5" height="1.2" fill="#8ed06e"/><rect x="3" y="41" width="5" height="1.2" fill="#7fcb7a"/><rect x="3" y="43" width="5" height="1.2" fill="#6fc688"/><rect x="3" y="45" width="5" height="1.2" fill="#5fc095"/><rect x="3" y="47" width="5" height="1.2" fill="#52bca2"/><rect x="3" y="49" width="5" height="1.2" fill="#49b8ab"/><rect x="3" y="51" width="5" height="1.2" fill="#43b5b2"/></svg>
</div>
<div class="clip" style="left:521px;top:507px;width:591px;height:244px;background:#2c2c2c">
<div class="r" style="left:0px;top:0px;width:591px;height:21px;background:#212121;"></div>
<div class="r" style="left:1px;top:4px;width:95px;height:17px;background:#3a3a3a;"></div>
<div class="r" style="left:1px;top:2px;width:95px;height:2px;background:#3d87d1;"></div>
<div class="t" style="left:7px;top:4.5px;color:#bbbbbb;font-size:12.5px;">Frame Debug</div>
<div class="r" style="left:0px;top:0px;width:1px;height:244px;background:#191919;"></div>
<div class="r" style="left:1px;top:21px;width:312px;height:20px;background:#404040;"></div>
<div class="r" style="left:0px;top:41px;width:591px;height:1px;background:#1e1e1e;"></div>
<div class="r" style="left:313px;top:21px;width:2px;height:20px;background:#222222;"></div>
<div class="r" style="left:315px;top:21px;width:276px;height:20px;background:#333333;"></div>
<div class="t" style="left:136px;top:24px;color:#bbbbbb;font-size:12.5px;">Disable</div>
<div class="t" style="left:318px;top:24px;color:#bbbbbb;font-size:12.5px;">Editor</div>
<svg class="r" style="left:584px;top:29px;" width="9" height="5" viewBox="0 0 9 5"><path d="M0 0.2 L9 0.2 L4.5 4.8 Z" fill="#c0c0c0"/></svg>
<svg class="r" style="left:4.5px;top:47px;" width="10" height="9" viewBox="0 0 10 9"><path d="M0.5 0.5 L9.5 0.5 L5 8.5 Z" fill="#5c5c5c"/></svg>
<div class="t" style="left:17px;top:43px;color:#bbbbbb;font-size:12.5px;">Camera.Render</div>
<div class="t" style="left:290px;top:43px;color:#bbbbbb;font-size:12.5px;">5</div>
<svg class="r" style="left:18.5px;top:63px;" width="10" height="9" viewBox="0 0 10 9"><path d="M0.5 0.5 L9.5 0.5 L5 8.5 Z" fill="#5c5c5c"/></svg>
<div class="t" style="left:31px;top:59px;color:#bbbbbb;font-size:12.5px;">Drawing</div>
<div class="t" style="left:290px;top:59px;color:#bbbbbb;font-size:12.5px;">4</div>
<div class="t" style="left:45px;top:75px;color:#bbbbbb;font-size:12.5px;">Grab RenderTexture</div>
<div class="t" style="left:45px;top:91px;color:#bbbbbb;font-size:12.5px;">Draw Dynamic</div>
<svg class="r" style="left:32.5px;top:111px;" width="10" height="9" viewBox="0 0 10 9"><path d="M0.5 0.5 L9.5 0.5 L5 8.5 Z" fill="#5c5c5c"/></svg>
<div class="t" style="left:45px;top:107px;color:#bbbbbb;font-size:12.5px;">Render.OpaqueGeometry</div>
<div class="t" style="left:290px;top:107px;color:#bbbbbb;font-size:12.5px;">2</div>
<svg class="r" style="left:46.5px;top:127px;" width="10" height="9" viewBox="0 0 10 9"><path d="M0.5 0.5 L9.5 0.5 L5 8.5 Z" fill="#5c5c5c"/></svg>
<div class="t" style="left:59px;top:123px;color:#bbbbbb;font-size:12.5px;">RenderForwardOpaque.Render</div>
<div class="t" style="left:290px;top:123px;color:#bbbbbb;font-size:12.5px;">2</div>
<svg class="r" style="left:60.5px;top:143px;" width="10" height="9" viewBox="0 0 10 9"><path d="M0.5 0.5 L9.5 0.5 L5 8.5 Z" fill="#5c5c5c"/></svg>
<div class="t" style="left:73px;top:139px;color:#bbbbbb;font-size:12.5px;">Clear</div>
<div class="t" style="left:290px;top:139px;color:#bbbbbb;font-size:12.5px;">2</div>
<div class="t" style="left:87px;top:155px;color:#bbbbbb;font-size:12.5px;">Clear (Z+stencil)</div>
<div class="t" style="left:87px;top:171px;color:#bbbbbb;font-size:12.5px;">Clear (color+Z+stencil)</div>
<svg class="r" style="left:18.5px;top:191px;" width="10" height="9" viewBox="0 0 10 9"><path d="M0.5 0.5 L9.5 0.5 L5 8.5 Z" fill="#5c5c5c"/></svg>
<div class="t" style="left:31px;top:187px;color:#bbbbbb;font-size:12.5px;">Camera.ImageEffects</div>
<div class="t" style="left:290px;top:187px;color:#bbbbbb;font-size:12.5px;">1</div>
<div class="t" style="left:45px;top:203px;color:#bbbbbb;font-size:12.5px;">Draw Dynamic</div>
<svg class="r" style="left:4.5px;top:223px;" width="10" height="9" viewBox="0 0 10 9"><path d="M0.5 0.5 L9.5 0.5 L5 8.5 Z" fill="#5c5c5c"/></svg>
<div class="t" style="left:17px;top:219px;color:#bbbbbb;font-size:12.5px;">UGUI.Rendering.RenderOverlays</div>
<div class="t" style="left:290px;top:219px;color:#bbbbbb;font-size:12.5px;">2</div>
<div class="t" style="left:31px;top:235px;color:#bbbbbb;font-size:12.5px;">Clear (stencil)</div>
<div class="r" style="left:31px;top:69px;width:180px;height:35px;background:transparent;box-sizing:border-box;border:2px solid #fa440c;border-radius:2px;"></div>
<div class="r" style="left:300px;top:42px;width:1px;height:202px;background:#1a1a1a;"></div>
<div class="r" style="left:301px;top:42px;width:290px;height:20px;background:#2a2a2a;"></div>
<div class="r" style="left:301px;top:62px;width:290px;height:1px;background:#1e1e1e;"></div>
<div class="t" style="left:305px;top:46px;color:#bbbbbb;font-size:12.5px;">RenderTarget</div>
<div class="t" style="left:457px;top:46px;color:#bbbbbb;font-size:12.5px;">&lt;No name&gt;</div>
<div class="r" style="left:301px;top:63px;width:290px;height:20px;background:#2e2e2e;"></div>
<div class="r" style="left:301px;top:83px;width:290px;height:1px;background:#1e1e1e;"></div>
<div class="t" style="left:305px;top:65.5px;color:#bbbbbb;font-size:12.5px;">RT 0</div>
<svg class="r" style="left:360px;top:70px;" width="8" height="5" viewBox="0 0 8 5"><path d="M0 0.2 L8 0.2 L4 4.8 Z" fill="#c0c0c0"/></svg>
<div class="r" style="left:371px;top:63px;width:1px;height:20px;background:#1e1e1e;"></div>
<div class="t" style="left:374px;top:65.5px;color:#bbbbbb;font-size:12.5px;">Channels</div>
<div class="r" style="left:429px;top:63px;width:23px;height:20px;background:#464646;"></div>
<div class="t" style="left:433px;top:65.5px;color:#bbbbbb;font-size:12.5px;">All</div>
<div class="r" style="left:452px;top:63px;width:1px;height:20px;background:#1e1e1e;"></div>
<div class="t" style="left:459px;top:65.5px;color:#bbbbbb;font-size:12.5px;">R</div>
<div class="r" style="left:476px;top:63px;width:1px;height:20px;background:#1e1e1e;"></div>
<div class="t" style="left:483px;top:65.5px;color:#bbbbbb;font-size:12.5px;">G</div>
<div class="r" style="left:500px;top:63px;width:1px;height:20px;background:#1e1e1e;"></div>
<div class="t" style="left:507px;top:65.5px;color:#bbbbbb;font-size:12.5px;">B</div>
<div class="r" style="left:524px;top:63px;width:1px;height:20px;background:#1e1e1e;"></div>
<div class="t" style="left:531px;top:65.5px;color:#bbbbbb;font-size:12.5px;">A</div>
<div class="r" style="left:552px;top:63px;width:1px;height:20px;background:#1e1e1e;"></div>
<div class="t" style="left:557px;top:65.5px;color:#bbbbbb;font-size:12.5px;">Levels</div>
<div class="t" style="left:307px;top:86px;color:#bbbbbb;font-size:12.5px;">1920x1080 R8G8B8A8_SRGB</div>
<div class="t" style="left:305px;top:104.5px;color:#acacac;font-size:12.5px;font-weight:bold;">Event #7: Draw Mesh</div>
<div class="t" style="left:305px;top:123.5px;color:#bbbbbb;font-size:12.5px;">Shader</div>
<div class="t" style="left:457px;top:123.5px;color:#bbbbbb;font-size:12.5px;">UI/Default, SubShader #0</div>
<div class="t" style="left:305px;top:143.5px;color:#bbbbbb;font-size:12.5px;">Pass</div>
<div class="t" style="left:457px;top:143.5px;color:#bbbbbb;font-size:12.5px;">Default</div>
<div class="t" style="left:305px;top:163.5px;color:#bbbbbb;font-size:12.5px;">Blend</div>
<div class="t" style="left:457px;top:163.5px;color:#bbbbbb;font-size:12.5px;">SrcAlpha OneMinusSrcAlpha</div>
<div class="t" style="left:305px;top:183.5px;color:#bbbbbb;font-size:12.5px;">ZClip</div>
<div class="t" style="left:457px;top:183.5px;color:#bbbbbb;font-size:12.5px;">True</div>
<div class="t" style="left:305px;top:203.5px;color:#bbbbbb;font-size:12.5px;">ZTest</div>
<div class="t" style="left:457px;top:203.5px;color:#bbbbbb;font-size:12.5px;">Always</div>
<div class="t" style="left:305px;top:223.5px;color:#bbbbbb;font-size:12.5px;">ZWrite</div>
<div class="t" style="left:457px;top:223.5px;color:#bbbbbb;font-size:12.5px;">Off</div>
</div>
</body></html>
